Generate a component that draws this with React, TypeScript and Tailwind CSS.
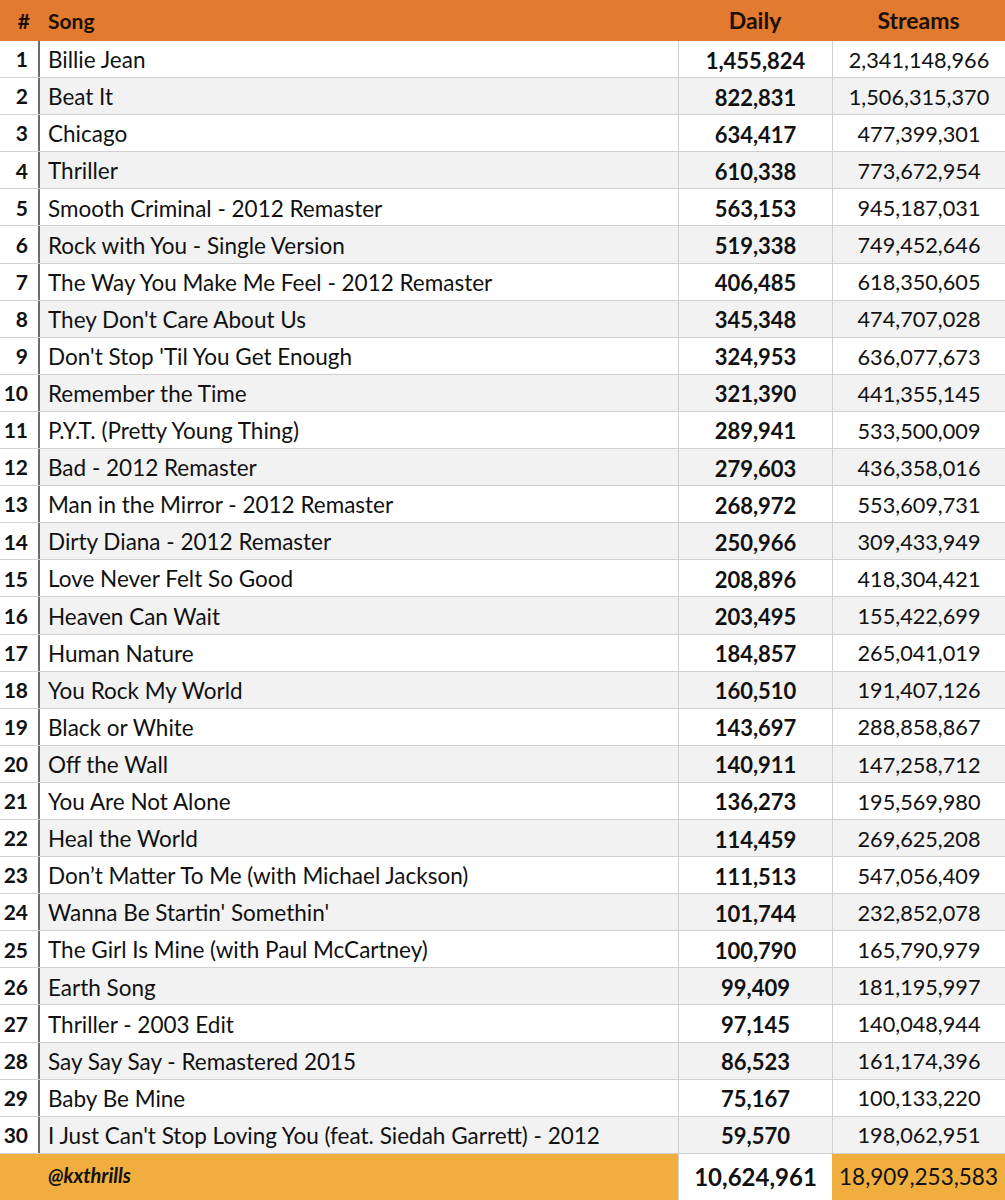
import React from "react";

const rows: [string, string, string][] = [
  ["Billie Jean", "1,455,824", "2,341,148,966"],
  ["Beat It", "822,831", "1,506,315,370"],
  ["Chicago", "634,417", "477,399,301"],
  ["Thriller", "610,338", "773,672,954"],
  ["Smooth Criminal - 2012 Remaster", "563,153", "945,187,031"],
  ["Rock with You - Single Version", "519,338", "749,452,646"],
  ["The Way You Make Me Feel - 2012 Remaster", "406,485", "618,350,605"],
  ["They Don't Care About Us", "345,348", "474,707,028"],
  ["Don't Stop 'Til You Get Enough", "324,953", "636,077,673"],
  ["Remember the Time", "321,390", "441,355,145"],
  ["P.Y.T. (Pretty Young Thing)", "289,941", "533,500,009"],
  ["Bad - 2012 Remaster", "279,603", "436,358,016"],
  ["Man in the Mirror - 2012 Remaster", "268,972", "553,609,731"],
  ["Dirty Diana - 2012 Remaster", "250,966", "309,433,949"],
  ["Love Never Felt So Good", "208,896", "418,304,421"],
  ["Heaven Can Wait", "203,495", "155,422,699"],
  ["Human Nature", "184,857", "265,041,019"],
  ["You Rock My World", "160,510", "191,407,126"],
  ["Black or White", "143,697", "288,858,867"],
  ["Off the Wall", "140,911", "147,258,712"],
  ["You Are Not Alone", "136,273", "195,569,980"],
  ["Heal the World", "114,459", "269,625,208"],
  ["Don\u2019t Matter To Me (with Michael Jackson)", "111,513", "547,056,409"],
  ["Wanna Be Startin' Somethin'", "101,744", "232,852,078"],
  ["The Girl Is Mine (with Paul McCartney)", "100,790", "165,790,979"],
  ["Earth Song", "99,409", "181,195,997"],
  ["Thriller - 2003 Edit", "97,145", "140,048,944"],
  ["Say Say Say - Remastered 2015", "86,523", "161,174,396"],
  ["Baby Be Mine", "75,167", "100,133,220"],
  ["I Just Can't Stop Loving You (feat. Siedah Garrett) - 2012", "59,570", "198,062,951"],
];

export default function App() {
  return (
    <div
      className="w-[1005px] h-[1200px] bg-white text-[#111] overflow-hidden flex flex-col"
      style={{ fontFamily: "Lato, 'Open Sans', sans-serif" }}
    >
      <div className="h-[41px] shrink-0 bg-[#e27b30] flex items-center text-[#1c1008] font-bold">
        <div className="w-[40px] pr-[10px] text-right text-[21px]">#</div>
        <div className="w-[638px] pl-[8px] text-[21px]">Song</div>
        <div className="w-[154px] text-center text-[23px]">Daily</div>
        <div className="w-[173px] text-center text-[23px]">Streams</div>
      </div>
      {rows.map((r, i) => {
        const even = i % 2 === 1;
        const bg = even ? "bg-[#f2f2f2]" : "bg-white";
        return (
          <div key={i} className="h-[37.1px] shrink-0 flex border-b border-[#d0d0d0]">
            <div className="w-[40px] shrink-0 pr-[10px] text-[21px] font-bold flex items-center justify-end bg-white border-r-2 border-[#6b6b6b]">
              {i + 1}
            </div>
            <div className={`w-[638px] shrink-0 pl-[8px] pt-[2px] flex items-center text-[22.5px] whitespace-nowrap ${bg}`}>
              {r[0]}
            </div>
            <div className={`w-[154px] shrink-0 flex items-center justify-center pt-[2px] font-bold text-[22px] border-l border-[#d0d0d0] ${bg}`}>
              {r[1]}
            </div>
            <div className={`w-[173px] shrink-0 flex items-center justify-center pt-[2px] text-[21.7px] border-l border-[#d0d0d0] ${bg}`}>
              {r[2]}
            </div>
          </div>
        );
      })}
      <div className="flex-1 flex bg-[#f0ae3f]">
        <div className="w-[40px] shrink-0" />
        <div className="w-[638px] shrink-0 pl-[8px] flex items-center text-[20px] font-bold italic pb-[3px]">
          @kxthrills
        </div>
        <div className="w-[154px] shrink-0 bg-white flex items-center justify-center text-[24px] font-bold border-l border-[#d0d0d0]">
          10,624,961
        </div>
        <div className="w-[173px] shrink-0 flex items-center justify-center text-[22.5px]">
          18,909,253,583
        </div>
      </div>
    </div>
  );
}
